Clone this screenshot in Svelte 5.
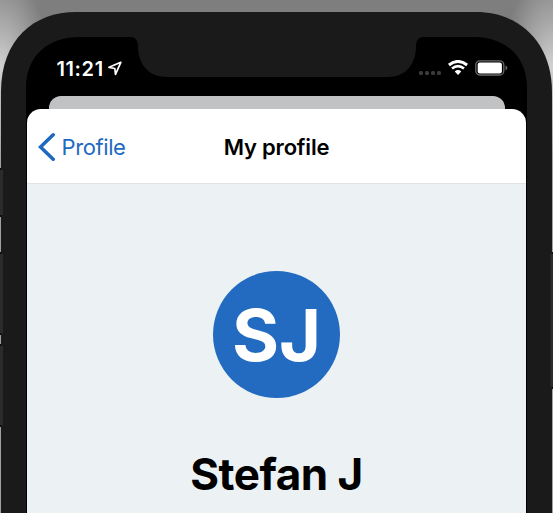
<script>
  const name = 'Stefan J';
  const initials = 'SJ';
  const signalDots = [0, 1, 2, 3];
</script>

<div class="stage">
  <svg class="device" width="553" height="513" viewBox="0 0 553 513" aria-hidden="true">
    <path d="M0 168h3v49H0z M0 252h3v83H0z M0 344h3v83H0z M550 252h3v137h-3z" fill="#0b0b0b" />
    <path d="M1 513V92C1 39 34 12 76 12H476C520 12 552 43 552 92V513Z" fill="#1a1a1a" />
    <path d="M0 170h3v45H0z M0 254h3v79H0z M0 346h3v79H0z M550.5 254h2.5v133h-2.5z" fill="#2b2b2b" />
    <path d="M26 513V88C26 55 49 37 79 37H130C135 37 138 40 138 46C138 65 149 77 167 77H388C405 77 416 65 416 46C416 40 419 37 424 37H474C505 37 527 56 527 88V513Z" fill="#000" />
  </svg>

  <div class="screen">
    <header class="status">
      <span class="time">11:21</span>
      <svg class="location" width="14" height="15" viewBox="0 0 14 15" aria-hidden="true">
        <path d="M12.800 1.300L1 6.300L6.800 7.500L7.500 13.300Z" fill="none" stroke="#fff" stroke-width="1.700" stroke-linejoin="round" />
      </svg>
      <div class="dots">
        {#each signalDots as dot (dot)}<i></i>{/each}
      </div>
      <svg class="wifi" width="20" height="15" viewBox="0 0 20 15" aria-hidden="true">
        <path d="M.9 5Q10-2.200 19.100 5" fill="none" stroke="#fff" stroke-width="2.900" />
        <path d="M4 8.600Q10 3.600 16 8.600" fill="none" stroke="#fff" stroke-width="2.600" />
        <path d="M6.700 11.500Q10 8.700 13.300 11.500L10 15Z" fill="#fff" />
      </svg>
      <svg class="battery" width="33" height="16" viewBox="0 0 33 16" aria-hidden="true">
        <rect x=".8" y=".8" width="28" height="14.200" rx="4" fill="none" stroke="#68686b" stroke-width="1.300" />
        <rect x="2.700" y="2.400" width="24.200" height="11" rx="2.200" fill="#fff" />
        <path d="M30.500 5.500Q32.300 6 32.300 7.900T30.500 10.300Z" fill="#68686b" />
      </svg>
    </header>
    <div class="behind"></div>
    <section class="sheet">
      <nav class="bar">
        <button class="back">
          <svg width="18" height="30" viewBox="0 0 18 30" aria-hidden="true">
            <path d="M15.200 2.800L2.500 15L15.200 27.200" fill="none" stroke="#2169c0" stroke-width="3.600" stroke-linecap="round" />
          </svg>
          <span>Profile</span>
        </button>
        <h1>My profile</h1>
      </nav>
      <main>
        <div class="avatar"><span>{initials}</span></div>
        <h2>{name}</h2>
      </main>
    </section>
  </div>
</div>

<style>
  .stage {
    position: relative;
    width: 553px;
    height: 513px;
    overflow: hidden;
    font-family: Inter, "Liberation Sans", sans-serif;
    background:
      radial-gradient(ellipse 50px 95px at 0 68px, #d2d2d2 0%, #d2d2d200 100%),
      radial-gradient(ellipse 50px 95px at 553px 68px, #d2d2d2 0%, #d2d2d200 100%),
      linear-gradient(#7f7f7f, #7b7b7b 40px, #a0a0a0 130px);
  }
  .device {
    position: absolute;
    inset: 0;
  }
  .screen {
    position: relative;
    width: 499px;
    height: 476px;
    margin-left: 27px;
    padding-top: 37px;
    display: flex;
    flex-direction: column;
  }
  .status {
    display: flex;
    height: 59px;
    flex: none;
    padding-left: 29.500px;
    color: #fff;
  }
  .time {
    width: 51.500px;
    margin-top: 19.500px;
    font-size: 20px;
    line-height: 24px;
    font-weight: 600;
    letter-spacing: .6px;
    white-space: nowrap;
  }
  .location {
    margin-top: 24px;
  }
  .dots {
    display: flex;
    gap: 2.3px;
    margin: 34px 0 0 296.500px;
  }
  .dots i {
    width: 4px;
    height: 4px;
    border-radius: 1.500px;
    background: #3b3b3b;
  }
  .wifi {
    margin: 23px 0 0 6.600px;
  }
  .battery {
    margin: 23px 0 0 7px;
  }
  .behind {
    flex: none;
    height: 13px;
    margin: 0 21.500px;
    border-radius: 12px 12px 0 0;
    background: #c1c2c4;
  }
  .sheet {
    flex: 1;
    display: flex;
    flex-direction: column;
    overflow: hidden;
    border-radius: 14px 14px 0 0;
    background: #fff;
  }
  .bar {
    box-sizing: border-box;
    height: 75px;
    flex: none;
    display: grid;
    grid-template-columns: 1fr auto 1fr;
    align-items: center;
    border-bottom: 1px solid #dfe3e6;
  }
  .back {
    display: flex;
    align-items: center;
    gap: 5.500px;
    padding: 1px 0 0 11px;
    border: 0;
    background: none;
    color: #2169c0;
    font: 400 22px/28px Inter, "Liberation Sans", sans-serif;
    letter-spacing: -.4px;
  }
  h1 {
    margin: 1px 0 0;
    font-size: 22px;
    line-height: 28px;
    font-weight: 600;
    letter-spacing: -.2px;
    color: #000;
  }
  main {
    flex: 1;
    display: flex;
    flex-direction: column;
    align-items: center;
    padding-top: 87px;
    background: #ecf1f4;
  }
  .avatar {
    width: 127px;
    height: 127px;
    flex: none;
    display: flex;
    align-items: center;
    justify-content: center;
    border-radius: 50%;
    background: #236bc0;
    color: #fff;
    font-size: 72px;
    line-height: 80px;
    font-weight: 700;
  }
  h2 {
    margin: 49px 0 0;
    font-size: 44px;
    line-height: 54px;
    font-weight: 700;
    letter-spacing: -.5px;
    white-space: nowrap;
    color: #000;
  }
</style>
